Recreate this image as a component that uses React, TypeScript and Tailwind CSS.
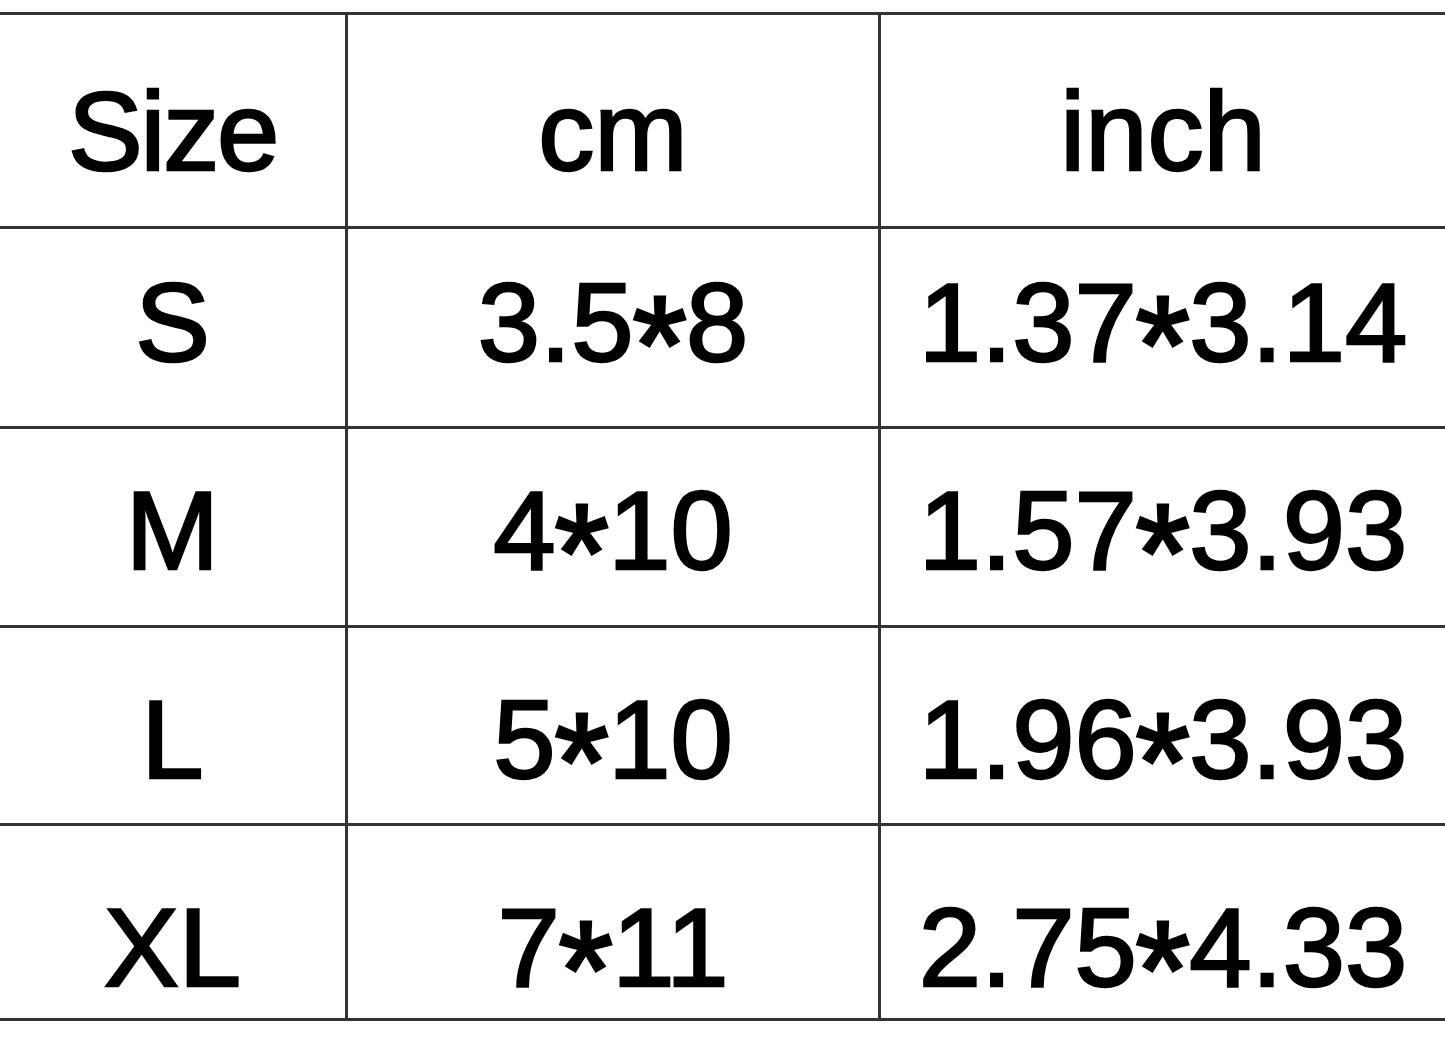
import React from "react";

const rows = [
  { size: "S", cm: ["3.5", "8"], inch: ["1.37", "3.14"], h: "h-[200px]", pt: "pt-[38px]" },
  { size: "M", cm: ["4", "10"], inch: ["1.57", "3.93"], h: "h-[199px]", pt: "pt-[46px]" },
  { size: "L", cm: ["5", "10"], inch: ["1.96", "3.93"], h: "h-[198px]", pt: "pt-[56px]" },
  { size: "XL", cm: ["7", "11"], inch: ["2.75", "4.33"], h: "h-[195px]", pt: "pt-[66px]" },
];

// star sits centred on the digits, a bit bigger than Arial's raised one
function Star() {
  return (
    <span className="inline-block leading-[0.5] mx-[0.04em] translate-y-[0.2em] scale-125">*</span>
  );
}

function Cell({ children, cls }: { children: React.ReactNode; cls: string }) {
  return (
    <div className={`border-b-[3px] border-[#333] text-center ${cls}`}>
      <div className="leading-none whitespace-nowrap">{children}</div>
    </div>
  );
}

export default function App() {
  return (
    <div className="w-[1445px] h-[1041px] bg-white pt-[12px] font-['Liberation_Sans',Arial,sans-serif] text-black text-[112px] [-webkit-text-stroke:2.5px_#000] overflow-hidden">
      <div className="grid grid-cols-[348px_533px_1fr] border-t-[3px] border-[#333]">
        {/* header */}
        <Cell cls="h-[214px] pt-[61px] border-r-[3px] tracking-[-0.02em]">Size</Cell>
        <Cell cls="h-[214px] pt-[61px] border-r-[3px]">cm</Cell>
        <Cell cls="h-[214px] pt-[61px]">inch</Cell>

        {rows.map((r) => (
          <React.Fragment key={r.size}>
            <Cell cls={`${r.h} ${r.pt} border-r-[3px]`}>{r.size}</Cell>
            <Cell cls={`${r.h} ${r.pt} border-r-[3px]`}>
              {r.cm[0]}
              <Star />
              {r.cm[1]}
            </Cell>
            <Cell cls={`${r.h} ${r.pt}`}>
              {r.inch[0]}
              <Star />
              {r.inch[1]}
            </Cell>
          </React.Fragment>
        ))}
      </div>
    </div>
  );
}
